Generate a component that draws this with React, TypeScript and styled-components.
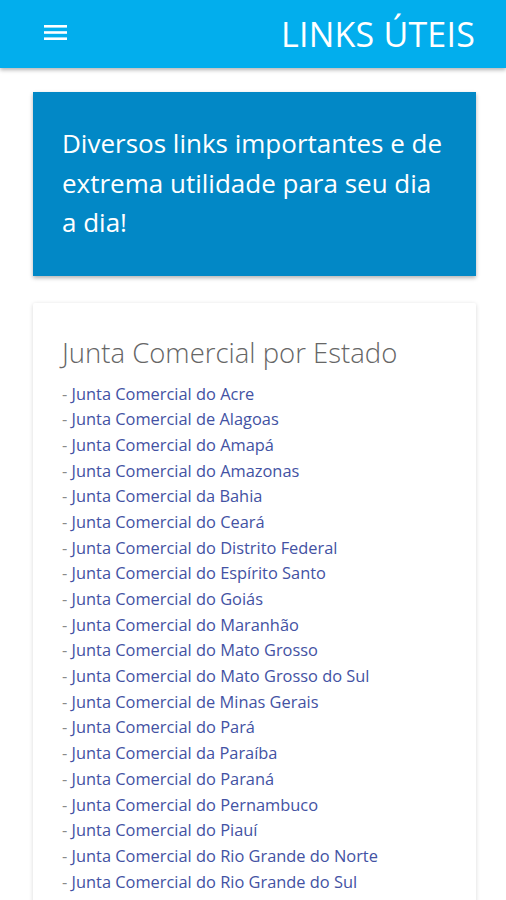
import React from 'react'
import styled, { createGlobalStyle } from 'styled-components'

const estados = [
  'do Acre',
  'de Alagoas',
  'do Amapá',
  'do Amazonas',
  'da Bahia',
  'do Ceará',
  'do Distrito Federal',
  'do Espírito Santo',
  'do Goiás',
  'do Maranhão',
  'do Mato Grosso',
  'do Mato Grosso do Sul',
  'de Minas Gerais',
  'do Pará',
  'da Paraíba',
  'do Paraná',
  'do Pernambuco',
  'do Piauí',
  'do Rio Grande do Norte',
  'do Rio Grande do Sul',
]

const GlobalStyle = createGlobalStyle`
  html, body {
    margin: 0;
    padding: 0;
    background: #ffffff;
    font-family: "Open Sans", "Noto Sans", sans-serif;
    overflow: hidden;
  }
`

const App: React.FunctionComponent = () => {
  return (
    <Page>
      <GlobalStyle />
      <Header>
        <MenuButton aria-label="menu">
          <svg width="24" height="18" viewBox="0 0 24 18">
            <rect x="0" y="1" width="23" height="2.6" fill="#fff" />
            <rect x="0" y="7.2" width="23" height="2.6" fill="#fff" />
            <rect x="0" y="13.4" width="23" height="2.6" fill="#fff" />
          </svg>
        </MenuButton>
        <Title>LINKS ÚTEIS</Title>
      </Header>
      <Content>
        <Banner>Diversos links importantes e de extrema utilidade para seu dia a dia!</Banner>
        <Card>
          <CardTitle>Junta Comercial por Estado</CardTitle>
          <LinkList>
            {estados.map(e => (
              <LinkItem key={e}>
                <Dash>-</Dash> <LinkText>Junta Comercial {e}</LinkText>
              </LinkItem>
            ))}
          </LinkList>
        </Card>
      </Content>
    </Page>
  )
}

export default App

const Page = styled.div`
  display: flex;
  flex-direction: column;
  height: 900px;
  overflow: hidden;
`

const Header = styled.header`
  display: flex;
  align-items: center;
  justify-content: space-between;
  height: 68px;
  padding: 0 31px 0 44px;
  background: #02aeed;
  box-shadow: 0 2px 4px rgba(0, 0, 0, 0.3);
  flex-shrink: 0;
  position: relative;
  z-index: 1;
`

const MenuButton = styled.div`
  display: flex;
  align-items: center;
  margin-top: -2px;
`

const Title = styled.h1`
  margin: 0;
  color: #ffffff;
  font-size: 34px;
  font-weight: 400;
  letter-spacing: 0.2px;
`

const Content = styled.main`
  display: flex;
  flex-direction: column;
  gap: 27px;
  padding: 24px 30px 0 33px;
`

const Banner = styled.div`
  background: #0288c6;
  color: #ffffff;
  font-size: 26px;
  line-height: 39.5px;
  padding: 32px 24px 33px 29px;
  box-shadow: 0 2px 4px rgba(0, 0, 0, 0.3);
`

const Card = styled.section`
  background: #ffffff;
  padding: 30px 10px 60px 29px;
  box-shadow: 0 1px 4px rgba(0, 0, 0, 0.16);
  border-radius: 2px;
`

const CardTitle = styled.h2`
  margin: 0 0 8px 0;
  color: #666666;
  font-size: 27.5px;
  font-weight: 300;
  line-height: 40px;
`

const LinkList = styled.ul`
  list-style: none;
  margin: 0;
  padding: 0;
`

const LinkItem = styled.li`
  font-size: 16.4px;
  line-height: 25.68px;
  white-space: nowrap;
`

const Dash = styled.span`
  color: #8a8a8a;
`

const LinkText = styled.span`
  color: #4352a3;
`
